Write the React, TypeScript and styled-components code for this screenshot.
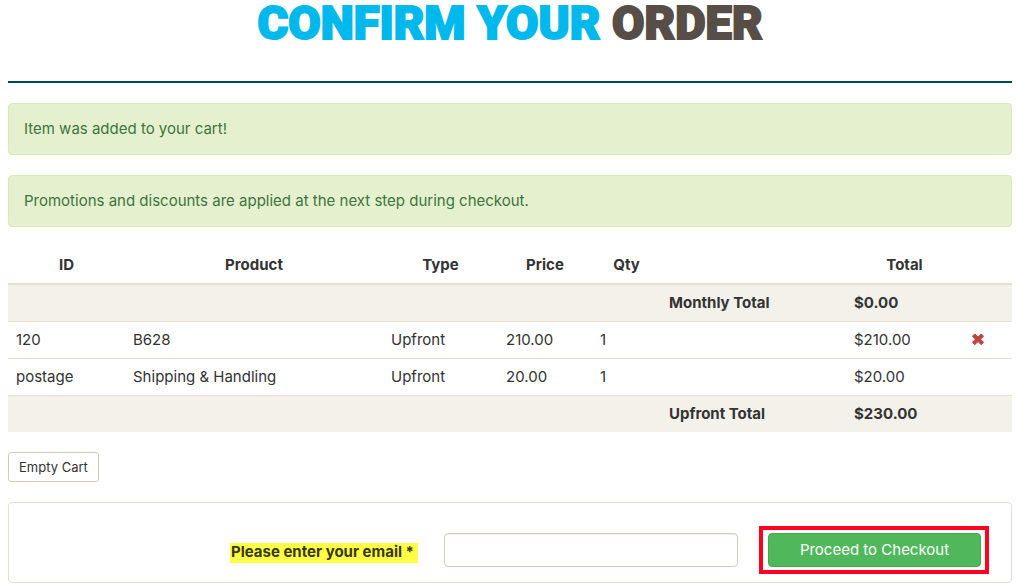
import React from "react";
import styled, { createGlobalStyle } from "styled-components";

const GlobalStyle = createGlobalStyle`
  *, *::before, *::after { box-sizing: border-box; }
  body {
    margin: 0;
    background: #fff;
    color: #333;
    font-family: Inter, "Open Sans", sans-serif;
    font-size: 15px;
    line-height: 20px;
  }
`;

const Page = styled.main`
  padding: 0 4px 0 8px;
`;

const Header = styled.header`
  padding-bottom: 36px;
  margin-bottom: 20px;
  border-bottom: 2px solid #00484f;
`;

const Title = styled.h1`
  margin: 0;
  color: #00b9ec;
  font-family: Roboto, sans-serif;
  font-size: 47px;
  font-weight: 900;
  line-height: 45px;
  text-align: center;
  text-transform: uppercase;
  -webkit-text-stroke: 2px currentColor;
`;

const TitleAccent = styled.span`
  color: #574f47;
`;

const Alert = styled.div`
  margin-bottom: 20px;
  padding: 15px;
  border: 1px solid #dbe8b8;
  border-radius: 4px;
  background: #e4f0ce;
  color: #3c763d;
`;

const CartTable = styled.table`
  width: 100%;
  margin-bottom: 20px;
  table-layout: fixed;
  border-collapse: separate;
  border-spacing: 0;
`;

const Column = styled.col<{ $width?: number }>`
  width: ${({ $width }) => ($width ? `${$width}px` : "auto")};
`;

const HeadCell = styled.th`
  padding: 8px;
  border-bottom: 2px solid #e6dfcf;
  font-weight: 700;
  text-align: center;
`;

const Row = styled.tr<{ $total?: boolean }>`
  background: ${({ $total }) => ($total ? "#f4f1ea" : "#fff")};
  font-weight: ${({ $total }) => ($total ? 700 : 400)};
`;

const Cell = styled.td`
  height: 36px;
  padding: 8px;

  ${Row}:not(:first-child) > & {
    border-top: 1px solid #e6dfcf;
    height: 37px;
  }
`;

const RemoveButton = styled.button`
  display: block;
  padding: 0;
  border: 0;
  background: none;
  color: #c0443f;
  cursor: pointer;

  svg {
    display: block;
    width: 14px;
    height: 14px;
  }
`;

const EmptyButton = styled.button`
  display: block;
  height: 30px;
  margin-bottom: 20px;
  padding: 0 10px;
  border: 1px solid #d5cbbb;
  border-radius: 3px;
  background: #fff;
  color: #333;
  font: 400 13px/20px Inter, sans-serif;
  cursor: pointer;
`;

const CheckoutPanel = styled.form`
  display: grid;
  grid-template-columns: 414fr 294fr 230fr;
  gap: 21px;
  align-items: center;
  padding: 23px 22px 8px 0;
  border: 1px solid #e2dfcd;
  border-radius: 4px;
`;

const EmailLabel = styled.label`
  justify-self: end;
  margin: 5px 5px 0 0;
  padding: 0 4px 3px 1px;
  background: #ffff48;
  color: #38380f;
  font-weight: 700;
  line-height: 17px;
  white-space: nowrap;
`;

const EmailInput = styled.input`
  width: 100%;
  height: 34px;
  padding: 6px 12px;
  border: 1px solid #d5cbbb;
  border-radius: 4px;
  background: #fff;
  box-shadow: inset 0 1px 1px rgba(0, 0, 0, 0.07);
  font: inherit;
`;

const Highlight = styled.div`
  padding: 3px 4px 3px 5px;
  border: 4px solid #ff0022;
`;

const CheckoutButton = styled.button`
  display: block;
  width: 100%;
  height: 34px;
  padding: 0;
  border: 1px solid #3fab49;
  border-radius: 4px;
  background: #50b85a;
  color: #fff;
  font: inherit;
  cursor: pointer;
`;

const columns = [
  { label: "ID", width: 117 },
  { label: "Product" },
  { label: "Type", width: 115 },
  { label: "Price", width: 94 },
  { label: "Qty", width: 69 },
  { label: "", width: 185 },
  { label: "Total", width: 117 },
  { label: "", width: 49 },
];

const items = [
  { id: "120", product: "B628", type: "Upfront", price: "210.00", qty: 1, total: "$210.00", removable: true },
  { id: "postage", product: "Shipping & Handling", type: "Upfront", price: "20.00", qty: 1, total: "$20.00", removable: false },
];

function TotalRow({ label, amount }: { label: string; amount: string }) {
  return (
    <Row $total>
      <Cell colSpan={5} />
      <Cell>{label}</Cell>
      <Cell>{amount}</Cell>
      <Cell />
    </Row>
  );
}

export default function App() {
  return (
    <>
      <GlobalStyle />
      <Page>
        <Header>
          <Title>
            Confirm your <TitleAccent>order</TitleAccent>
          </Title>
        </Header>

        <Alert>Item was added to your cart!</Alert>
        <Alert>Promotions and discounts are applied at the next step during checkout.</Alert>

        <CartTable>
          <colgroup>
            {columns.map((column, i) => (
              <Column key={i} $width={column.width} />
            ))}
          </colgroup>
          <thead>
            <tr>
              {columns.map((column, i) => (
                <HeadCell key={i}>{column.label}</HeadCell>
              ))}
            </tr>
          </thead>
          <tbody>
            <TotalRow label="Monthly Total" amount="$0.00" />
            {items.map((item) => (
              <Row key={item.id}>
                <Cell>{item.id}</Cell>
                <Cell>{item.product}</Cell>
                <Cell>{item.type}</Cell>
                <Cell>{item.price}</Cell>
                <Cell>{item.qty}</Cell>
                <Cell />
                <Cell>{item.total}</Cell>
                <Cell>
                  {item.removable && (
                    <RemoveButton type="button" aria-label="Remove item">
                      <svg viewBox="0 0 14 14" aria-hidden="true">
                        <path
                          d="M3.800 0.900 7 4.100 10.200 0.900 12.600 3.300 9.500 6.200 12.600 9.300 10.200 11.700 7 8.500 3.800 11.700 1.400 9.300 4.500 6.200 1.400 3.300Z"
                          fill="currentColor"
                          stroke="currentColor"
                          strokeWidth="1"
                          strokeLinejoin="round"
                        />
                      </svg>
                    </RemoveButton>
                  )}
                </Cell>
              </Row>
            ))}
            <TotalRow label="Upfront Total" amount="$230.00" />
          </tbody>
        </CartTable>

        <EmptyButton type="button">Empty Cart</EmptyButton>

        <CheckoutPanel onSubmit={(event) => event.preventDefault()}>
          <EmailLabel htmlFor="email">Please enter your email *</EmailLabel>
          <EmailInput id="email" type="email" />
          <Highlight>
            <CheckoutButton type="submit">Proceed to Checkout</CheckoutButton>
          </Highlight>
        </CheckoutPanel>
      </Page>
    </>
  );
}
